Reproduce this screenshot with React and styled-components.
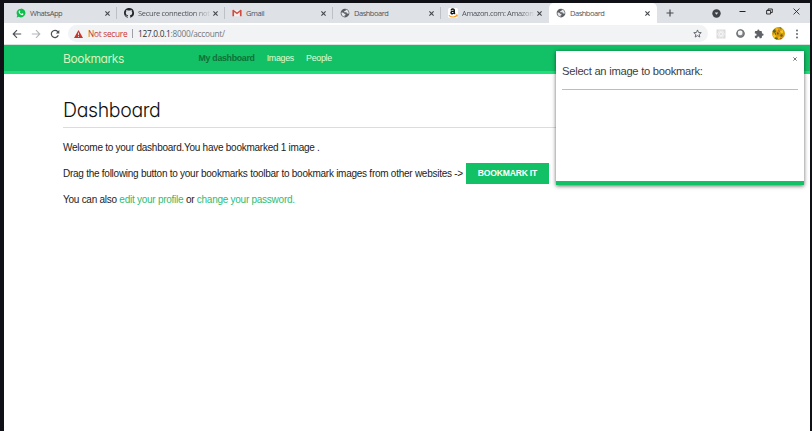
import React from "react";
import styled, { createGlobalStyle, css } from "styled-components";

const GREEN = "#12c065";

const GlobalStyle = createGlobalStyle`
  * { box-sizing: border-box; }
  body { margin: 0; background: #101116; overflow: hidden; }
  svg { display: block; flex: none; }
`;

const Desktop = styled.div`
  width: 812px;
  height: 431px;
  padding: 3px 2px 0 4px;
  background: #101116;
`;

const BrowserWindow = styled.div`
  height: 428px;
  display: flex;
  flex-direction: column;
  background: #fff;
  overflow: hidden;
`;

const TabStrip = styled.div`
  display: flex;
  height: 20px;
  padding-left: 5px;
  background: #dee1e6;
`;

const TabItem = styled.div`
  display: flex;
  align-items: center;
  width: 108px;
  height: 20px;
  padding-left: 6.5px;
  border-radius: 5px 5px 0 0;
  background: ${(p) => (p.$active ? "#fff" : "transparent")};
`;

const TabTitle = styled.span`
  width: 72px;
  margin-left: 4.5px;
  white-space: nowrap;
  font: 7.5px/20px "Open Sans", sans-serif;
  letter-spacing: ${(p) => p.$track}px;
  color: #50545a;
  ${(p) =>
    p.$fade &&
    css`
      mask-image: linear-gradient(to right, #000 78%, transparent 102%);
    `}
`;

const TabClose = styled.span`
  display: flex;
  justify-content: center;
  width: 8px;
  margin-left: 1.5px;
`;

const TabDivider = styled.span`
  width: 1px;
  height: 12px;
  margin-left: auto;
  background: ${(p) => (p.$hidden ? "transparent" : "#bdc0c5")};
`;

const StripControls = styled.div`
  display: flex;
  align-items: center;
  flex: 1;
  padding-left: 9px;
`;

const WindowControls = styled.div`
  display: flex;
  align-items: center;
  gap: 20px;
  height: 17px;
  margin: 0 10px 3px auto;
`;

const Toolbar = styled.div`
  display: flex;
  align-items: center;
  height: 22px;
  padding: 0 11px 0 8px;
  border-bottom: 1px solid #d9e3dc;
`;

const NavButtons = styled.div`
  display: flex;
  gap: 9px;
  width: 56px;
`;

const AddressBar = styled.div`
  display: flex;
  align-items: center;
  width: 640px;
  height: 17px;
  padding: 0 6px;
  border-radius: 9px;
  background: #f1f3f4;
  font: 8.3px/17px "Open Sans", sans-serif;
`;

const NotSecure = styled.span`
  width: 42px;
  margin-left: 5px;
  white-space: nowrap;
  letter-spacing: -0.28px;
  color: #c9372c;
`;

const AddressDivider = styled.span`
  width: 1px;
  height: 9px;
  margin: 0 5px 0 2px;
  background: #9da1a6;
`;

const Url = styled.span`
  flex: 1;
  letter-spacing: -0.27px;
  color: #73777c;
  b { font-weight: 400; color: #303236; }
`;

const Extensions = styled.div`
  display: flex;
  align-items: center;
  gap: 9.5px;
  flex: 1;
  padding: 0 0 0 8px;
`;

const Avatar = styled.span`
  display: flex;
  width: 13px;
  height: 13px;
  margin-left: -1.500px;
  border-radius: 50%;
  overflow: hidden;
`;

const Page = styled.div`
  position: relative;
  flex: 1;
  font-family: "Liberation Sans", Arial, sans-serif;
  color: #1c1c1c;
`;

const SiteHeader = styled.header`
  display: flex;
  height: 29px;
  padding-left: 59px;
  background: ${GREEN};
  border-bottom: 3px solid #1fe07b;
`;

const Logo = styled.span`
  width: 135.5px;
  font: 400 12px/27px Inter, sans-serif;
  font-feature-settings: "cv11";
  letter-spacing: -0.36px;
  color: #d8f3bd;
`;

const Menu = styled.nav`
  display: flex;
  gap: 12px;
`;

const MenuItem = styled.a`
  font-size: 8.8px;
  line-height: 26px;
  letter-spacing: ${(p) => (p.$selected ? -0.29 : -0.25)}px;
  font-weight: ${(p) => (p.$selected ? 700 : 400)};
  color: ${(p) => (p.$selected ? "#107038" : "#e2fbd2")};
`;

const Content = styled.main`
  padding: 21px 58px 0 59px;
`;

const Heading = styled.h1`
  height: 33px;
  margin: 0 0 10px;
  border-bottom: 1px solid #dcdcdc;
  font: 300 19.5px/31px Inter, sans-serif;
  font-feature-settings: "cv11";
  letter-spacing: -0.37px;
  color: #111;
`;

const Paragraph = styled.p`
  display: flex;
  align-items: center;
  height: 18px;
  margin: 0 0 8px;
  font-size: 10px;
  letter-spacing: -0.257px;
  white-space: pre;
`;

const Link = styled.a`
  color: #2fbc73;
`;

const BookmarkletButton = styled.a`
  display: flex;
  align-items: center;
  justify-content: center;
  width: 83px;
  height: 21px;
  margin-left: 3px;
  background: ${GREEN};
  color: #fff;
  font-size: 8.6px;
  letter-spacing: -0.2px;
  font-weight: 700;
`;

const BookmarkletPanel = styled.aside`
  position: absolute;
  top: 6px;
  right: 6px;
  width: 248px;
  height: 134px;
  padding: 0 6px;
  background: #fff;
  border-bottom: 4px solid ${GREEN};
  box-shadow: 0 1px 4px rgba(0, 0, 0, 0.6);
`;

const PanelTitle = styled.h2`
  height: 39px;
  margin: 0;
  padding-top: 13px;
  border-bottom: 1px solid #bdbdbd;
  font-size: 11.2px;
  line-height: 14px;
  letter-spacing: -0.26px;
  font-weight: 400;
  color: #404040;
`;

const PanelClose = styled.span`
  position: absolute;
  top: 6px;
  right: 7px;
`;

const Cross = ({ size = 5, color = "#44474b", width = 1.1 }) => (
  <svg width={size} height={size} viewBox="0 0 5 5" stroke={color} strokeWidth={width}>
    <path d="M.4.4l4.2 4.2M4.6.4L.4 4.6" />
  </svg>
);

const WhatsAppIcon = () => (
  <svg width="10" height="10" viewBox="0 0 24 24">
    <path fill="#13bd4b" d="M12 1.5A10.5 10.5 0 0 0 3 17.4L1.6 22.5l5.2-1.4A10.5 10.5 0 1 0 12 1.5z" />
    <path fill="#fff" d="M8.9 6.5c-.4-.5-1.2-.4-1.7.2-1.8 2-.7 4.8 1.5 7.1 2.5 2.7 6 4.4 8.2 2.6.9-.7 1.2-2 .8-2.4l-2.6-1.3c-.5-.2-1.2 1.3-1.7 1.3-1 0-3.8-2.3-3.9-3.5 0-.4 1-.9.9-1.5z" />
  </svg>
);

const GithubIcon = () => (
  <svg width="10" height="10" viewBox="0 0 16 16" fill="#24272b">
    <path d="M8 0C3.58 0 0 3.58 0 8c0 3.54 2.29 6.53 5.47 7.59.4.07.55-.17.55-.38v-1.49c-2.23.48-2.69-.95-2.69-.95-.36-.92-.89-1.17-.89-1.17-.73-.5.05-.49.05-.49.8.06 1.23.83 1.23.83.71 1.22 1.87.87 2.33.66.07-.52.28-.87.51-1.07-1.78-.2-3.64-.89-3.64-3.95 0-.87.31-1.59.82-2.15-.08-.2-.36-1.02.08-2.12 0 0 .67-.21 2.2.82a7.6 7.6 0 0 1 4 0c1.53-1.04 2.2-.82 2.2-.82.44 1.1.16 1.92.08 2.12.51.56.82 1.27.82 2.15 0 3.07-1.87 3.75-3.65 3.95.29.25.54.73.54 1.48v2.2c0 .21.15.46.55.38A8 8 0 0 0 8 0z" />
  </svg>
);

const GmailIcon = () => (
  <svg width="10" height="10" viewBox="0 0 24 24">
    <path fill="#f4efee" d="M2 5h20v15H2z" />
    <path fill="#d04a3f" d="M1 5.5C1 4 3 3.5 4.2 4.5L12 10.6l7.8-6.1C21 3.5 23 4 23 5.5V20h-4V9.5l-7 5.5-7-5.5V20H1z" />
  </svg>
);

const GlobeIcon = () => (
  <svg width="10" height="10" viewBox="0 0 24 24">
    <circle cx="12" cy="12" r="10.5" fill="#5b5f64" />
    <path fill="#e6e8eb" d="M3.5 11c4 .2 6 1.2 6.5 3h3v3.5h-2V21C6 20.5 3 16.5 3.5 11zM14 3.5l-.5 3-3.5 1v2.5h5.500l1 3h3l1.2 1.5C22.2 9.5 19 4.500 14 3.500z" />
  </svg>
);

const AmazonIcon = () => (
  <svg width="10" height="10" viewBox="0 0 24 24" fill="none">
    <rect width="24" height="24" rx="4" fill="#fff" />
    <path stroke="#111" strokeWidth="3.4" d="M7.5 5.500C8 1.500 15 1 15 5.500V11c0 1.500.5 2.200 1.800 3M15 7.500c-5 0-7.800 1-7.800 3.700 0 4 6.300 3.500 7.800-.7" />
    <path stroke="#f79a1c" strokeWidth="2.6" d="M2 17.500c6 5 14 5 20 .5M18.500 17H22v3.500" />
  </svg>
);

const BackIcon = () => (
  <svg width="10" height="10" viewBox="0 0 10 10" fill="none" stroke="#4c5055" strokeWidth="1.15">
    <path d="M9.2 5H1.500M5 1.200L1.200 5 5 8.800" />
  </svg>
);

const ForwardIcon = () => (
  <svg width="10" height="10" viewBox="0 0 10 10" fill="none" stroke="#b2b5b9" strokeWidth="1.1">
    <path d="M.8 5h7.700M5 1.200L8.800 5 5 8.800" />
  </svg>
);

const ReloadIcon = () => (
  <svg width="10" height="10" viewBox="0 0 10 10" fill="none" stroke="#4c5055" strokeWidth="1.25">
    <path d="M8.300 6.300A3.600 3.600 0 1 1 7.700 2.600L8.600 3.700" />
    <path fill="#4c5055" stroke="none" d="M9.300.9v3.500H5.800z" />
  </svg>
);

const WarningIcon = () => (
  <svg width="9" height="8" viewBox="0 0 9 8">
    <path fill="#c9372c" d="M4.500 0L9 8H0z" />
    <path stroke="#f1f3f4" strokeWidth=".9" d="M4.500 2.700v2.400M4.500 5.900v1" />
  </svg>
);

const StarIcon = () => (
  <svg width="9" height="9" viewBox="0 0 24 24" fill="none" stroke="#55595e" strokeWidth="2.3">
    <path d="M12 2.500l2.800 6.700 7.200.6-5.500 4.700 1.700 7-6.200-3.800-6.200 3.800 1.700-7L2 9.800l7.200-.6z" />
  </svg>
);

const AtomIcon = () => (
  <svg width="10" height="10" viewBox="0 0 10 10" fill="none" stroke="#fafafa" strokeWidth=".6">
    <path fill="#dadbdc" stroke="none" d="M.5.5h9v9h-9z" />
    <ellipse cx="5" cy="5" rx="3.7" ry="1.4" />
    <ellipse cx="5" cy="5" rx="3.7" ry="1.4" transform="rotate(60 5 5)" />
    <ellipse cx="5" cy="5" rx="3.7" ry="1.4" transform="rotate(120 5 5)" />
  </svg>
);

const LensIcon = () => (
  <svg width="9" height="9" viewBox="0 0 8 8">
    <circle cx="4" cy="4" r="3.3" fill="#85888b" stroke="#66696d" strokeWidth="1" />
    <circle cx="3.7" cy="3.5" r="2.1" fill="#f6f6f6" />
  </svg>
);

const PuzzleIcon = () => (
  <svg width="10" height="10" viewBox="0 0 24 24" fill="#5f6368">
    <path d="M20.500 11H19V7a2 2 0 0 0-2-2h-4V3.500a2.500 2.500 0 0 0-5 0V5H4a2 2 0 0 0-2 2v3.800h1.500a2.700 2.700 0 0 1 0 5.400H2V20a2 2 0 0 0 2 2h3.800v-1.500a2.700 2.700 0 0 1 5.400 0V22H17a2 2 0 0 0 2-2v-4h1.500a2.500 2.500 0 0 0 0-5z" />
  </svg>
);

const AvatarPicture = () => (
  <svg width="13" height="13" viewBox="0 0 13 13">
    <path fill="#d99a0a" d="M0 0h13v13H0z" />
    <path fill="#5e6518" d="M0 4l3-2 1 3-2 1zM7 0h3L9 2zM5 5l2 1-1 2-1-1zM9 7l2 1-1 2-2-1zM3 10l3 1-1 2-3-1z" />
    <path fill="#f8c81c" d="M4 1l2 1-1 2zM8 4l3-1v3L9 6zM1 8l2-1 1 3-2 1zM7 9l1 2-2 1z" />
    <path fill="#a0561a" d="M7 3l1 2-2-1zM3 6h1v2H3zM8 11l2 0-1 2z" />
  </svg>
);

const MenuDotsIcon = () => (
  <svg width="4" height="10" viewBox="0 0 4 10" fill="#55595e">
    <circle cx="2" cy="1.5" r=".9" />
    <circle cx="2" cy="5" r=".9" />
    <circle cx="2" cy="8.5" r=".9" />
  </svg>
);

const PlusIcon = () => (
  <svg width="8" height="8" viewBox="0 0 8 8" stroke="#484b50" strokeWidth="1.2">
    <path d="M4 .5v7M.5 4h7" />
  </svg>
);

const MediaIcon = styled(({ className }) => (
  <svg className={className} width="9" height="9" viewBox="0 0 9 9">
    <circle cx="4.5" cy="4.5" r="4.2" fill="#3f4246" />
    <path fill="#dee1e6" d="M2.700 3.600h3.600l-1.800 2.200z" />
  </svg>
))`
  margin-left: 37.5px;
`;

const MinimizeIcon = () => (
  <svg width="7" height="7" viewBox="0 0 7 7">
    <path fill="#222" d="M.5 3h6v1h-6z" />
  </svg>
);

const RestoreIcon = () => (
  <svg width="7" height="7" viewBox="0 0 7 7" fill="none" stroke="#222" strokeWidth=".9">
    <path d="M.6 2.500h4v3.500h-4zM2 2.500V1h4.300v3.500H4.600" />
  </svg>
);

const tabs = [
  { icon: WhatsAppIcon, title: "WhatsApp", track: -0.46 },
  { icon: GithubIcon, title: "Secure connection not", fade: true, track: -0.32 },
  { icon: GmailIcon, title: "Gmail", track: -0.4 },
  { icon: GlobeIcon, title: "Dashboard", track: -0.48 },
  { icon: AmazonIcon, title: "Amazon.com: Amazon", fade: true, track: -0.36 },
  { icon: GlobeIcon, title: "Dashboard", active: true, track: -0.48 },
];

export default function App() {
  return (
    <Desktop>
      <GlobalStyle />
      <BrowserWindow>
        <TabStrip>
          {tabs.map(({ icon: Icon, title, fade, active, track }, i) => (
            <TabItem key={i} $active={active}>
              <Icon />
              <TabTitle $fade={fade} $track={track}>
                {title}
              </TabTitle>
              <TabClose>
                <Cross />
              </TabClose>
              <TabDivider $hidden={i >= 4} />
            </TabItem>
          ))}
          <StripControls>
            <PlusIcon />
            <MediaIcon />
            <WindowControls>
              <MinimizeIcon />
              <RestoreIcon />
              <Cross size={7} color="#222" width={0.6} />
            </WindowControls>
          </StripControls>
        </TabStrip>
        <Toolbar>
          <NavButtons>
            <BackIcon />
            <ForwardIcon />
            <ReloadIcon />
          </NavButtons>
          <AddressBar>
            <WarningIcon />
            <NotSecure>Not secure</NotSecure>
            <AddressDivider />
            <Url>
              <b>127.0.0.1</b>:8000/account/
            </Url>
            <StarIcon />
          </AddressBar>
          <Extensions>
            <AtomIcon />
            <LensIcon />
            <PuzzleIcon />
            <Avatar>
              <AvatarPicture />
            </Avatar>
            <MenuDotsIcon />
          </Extensions>
        </Toolbar>
        <Page>
          <SiteHeader>
            <Logo>Bookmarks</Logo>
            <Menu>
              <MenuItem $selected>My dashboard</MenuItem>
              <MenuItem>Images</MenuItem>
              <MenuItem>People</MenuItem>
            </Menu>
          </SiteHeader>
          <Content>
            <Heading>Dashboard</Heading>
            <Paragraph>Welcome to your dashboard.You have bookmarked 1 image .</Paragraph>
            <Paragraph>
              Drag the following button to your bookmarks toolbar to bookmark images from other websites -&gt;
              <BookmarkletButton>BOOKMARK IT</BookmarkletButton>
            </Paragraph>
            <Paragraph>
              You can also <Link>edit your profile</Link> or <Link>change your password.</Link>
            </Paragraph>
          </Content>
          <BookmarkletPanel>
            <PanelTitle>Select an image to bookmark:</PanelTitle>
            <PanelClose>
              <Cross size={4} color="#555" width={1} />
            </PanelClose>
          </BookmarkletPanel>
        </Page>
      </BrowserWindow>
    </Desktop>
  );
}
